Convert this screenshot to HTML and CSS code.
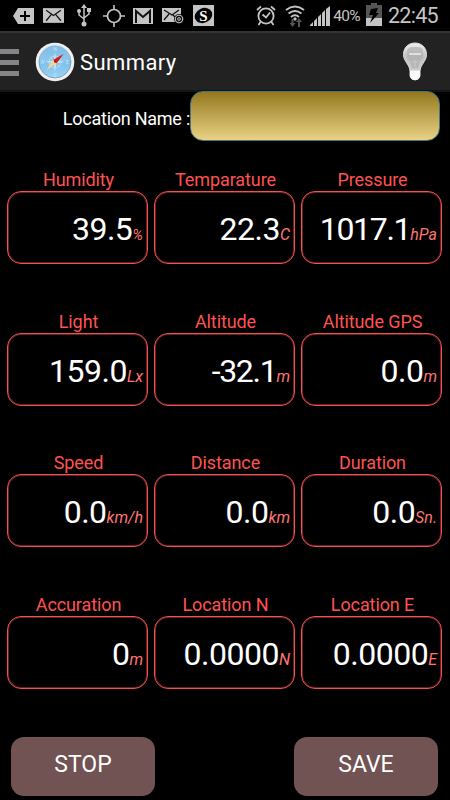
FILE: index.html
```html
<!DOCTYPE html>
<html lang="en">
<head>
    <meta charset="UTF-8">
    <meta name="viewport" content="width=device-width, initial-scale=1.0">
    <title>Summary</title>
    <link rel="stylesheet" href="styles.css">
</head>
<body>

<!-- status bar -->
<div class="status-bar">
    <div class="status-icons">
        <svg width="21" height="18" viewBox="0 0 21 18"><path d="M0 9l5-8h16v16H5z" fill="#c4c4c4"/><path d="M12 4v10M7 9h10" stroke="#000" stroke-width="2"/></svg>
        <svg width="21" height="15" viewBox="0 0 20 14"><path d="M0 0h20v14H0z" fill="#c4c4c4"/><path d="M3 2l7 5 7-5M3 12l5-6M17 12l-5-6" fill="none" stroke="#111" stroke-width="1.2"/></svg>
        <svg width="14" height="23" viewBox="0 0 14 23"><path d="M7 2v18M7 15l-5-4V7M7 14l5-4V6" fill="none" stroke="#c4c4c4" stroke-width="1.5"/><path d="M7 0l3 4H4zM10 4h4v4h-4z" fill="#c4c4c4"/><circle cx="2" cy="7" r="2" fill="#c4c4c4"/><circle cx="7" cy="20" r="2.5" fill="#c4c4c4"/></svg>
        <svg width="22" height="22" viewBox="0 0 22 22"><circle cx="11" cy="11" r="6.5" fill="none" stroke="#c4c4c4" stroke-width="1.7"/><path d="M11 0v5M11 17v5M0 11h5M17 11h5" stroke="#c4c4c4" stroke-width="1.6"/></svg>
        <svg width="20" height="16" viewBox="0 0 20 16"><path d="M0 0h20v16H0z" fill="#c4c4c4"/><path d="M3 15V3l7 6 7-6v12" fill="none" stroke="#111" stroke-width="2"/></svg>
        <svg width="22" height="17" viewBox="0 0 22 17"><path d="M0 1h19v14H0z" fill="#c4c4c4"/><path d="M2 3l8 5 7-5M2 13l5-6M11 8l2 2" fill="none" stroke="#111" stroke-width="1.3"/><circle cx="17" cy="12" r="5" fill="#111"/><circle cx="17" cy="12" r="3.7" fill="none" stroke="#c4c4c4" stroke-width="1.1"/><circle cx="17" cy="12" r="1.4" fill="none" stroke="#c4c4c4"/></svg>
        <svg class="money" width="21" height="21" viewBox="0 0 21 21"><path d="M0 0h21v21H0z" fill="#c4c4c4"/><ellipse cx="10.5" cy="10.5" rx="9" ry="7.3" fill="#000" transform="rotate(-25 10.5 10.5)"/><text x="10.5" y="16" text-anchor="middle">S</text></svg>
    </div>
    <div class="status-right">
        <svg width="20" height="21" viewBox="0 0 20 21"><circle cx="10" cy="11" r="7.6" fill="none" stroke="#c4c4c4" stroke-width="1.8"/><path d="M6.500 9.500l3.500 3 4-5M4.500 17l-2 3M15.500 17l2 3M1 5l4-3.500M19 5l-4-3.500" fill="none" stroke="#c4c4c4" stroke-width="1.8"/></svg>
        <svg class="wifi" width="20" height="22" viewBox="0 0 20 22"><g fill="none" stroke="#c4c4c4" stroke-width="1.9"><path d="M1 5q9-7 18 0"/><path d="M3.500 8.500q6.500-5 13 0"/><path d="M6 12q4-3.500 8 0"/></g><path d="M10 12l2 2-2 2-2-2z" fill="#c4c4c4"/><path d="M8.500 14v4h2l-3 4-3-4h2v-4zM13 22v-5h-2l3-4 3 4h-2v5z" fill="#555"/></svg>
        <svg class="signal" width="20" height="20" viewBox="0 0 20 20"><path d="M0 20v-1l3-3v4zM4 20v-5l3-3v8zM8 20v-9l3-3v12zM12 20V7l3-3v16zM16 20V3l4-3v20z" fill="#c4c4c4"/></svg>
        <span class="percent">40%</span>
        <svg class="battery" width="16" height="23" viewBox="0 0 16 23"><path d="M5 0h6v2h5v21H0V2h5z" fill="#555"/><path d="M0 15h16v8H0z" fill="#c4c4c4"/><path d="M5 6l7-1-2 5h3L4 20l3-8H3z" fill="#000"/></svg>
        <span class="clock">22:45</span>
    </div>
</div>

<header class="app-header">
    <div class="menu">
        <span></span>
        <span></span>
        <span></span>
    </div>
    <svg class="compass" width="40" height="40" viewBox="0 0 40 40">
        <defs>
            <linearGradient id="sky" x1="0" y1="0" x2="0" y2="1">
                <stop offset="0" stop-color="#5fa9df"/>
                <stop offset="1" stop-color="#9bd3f3"/>
            </linearGradient>
        </defs>
        <circle cx="20" cy="20" r="19.300" fill="#f1f0ee"/>
        <circle cx="20" cy="20" r="16" fill="url(#sky)" stroke="#6399c5" stroke-width=".8"/>
        <path d="M4.500 18a15.500 15.500 0 0 1 31 0q-15 5-31 0z" fill="#a5d4f1" opacity=".45"/>
        <circle cx="20" cy="20" r="6" fill="none" stroke="#b4dcf4"/>
        <path d="M20 10l1.200 8.800L30 20l-8.800 1.200L20 30l-1.200-8.800L10 20l8.800-1.200z" fill="#c9e7f8"/>
        <path d="M15 15l10 10M25 15L15 25" stroke="#b4dcf4" stroke-width=".8"/>
        <g class="compass-letters"><text x="20" y="9">N</text><text x="20" y="35">S</text><text x="7.500" y="22">W</text><text x="32.500" y="22">E</text></g>
        <path d="M28.500 12L18 18l3.500 3.500z" fill="#d81818"/>
        <path d="M11.500 28L18 18l3.500 3.500z" fill="#f0d98a"/>
        <circle cx="20" cy="19.700" r="1" fill="#911"/>
    </svg>
    <h1>Summary</h1>
    <svg class="bulb" width="26" height="40" viewBox="0 0 26 40">
        <defs>
            <linearGradient id="glass" x1="0" y1="0" x2="0" y2="1">
                <stop offset="0" stop-color="#f0f0f0"/>
                <stop offset=".35" stop-color="#c4c4c4"/>
                <stop offset="1" stop-color="#cfcfcf"/>
            </linearGradient>
        </defs>
        <path d="M13 1C6 1 1.500 6 1.500 12.500c0 7 6.500 10 6.500 17V34q1 4 5 4t5-4v-4.500c0-7 6.500-10 6.500-17C24.500 6 20 1 13 1z" fill="url(#glass)" stroke="#dedede"/>
        <path d="M5 9q1-4 5-4h6q4 0 5 4v7q-3 2-5 10h-6Q8 18 5 16z" fill="#aaa" opacity=".6"/>
        <path d="M7 12h12" stroke="#eee" stroke-width="1.500"/>
        <path d="M13 18v7M10 20h6" stroke="#c8c8c8"/>
        <path d="M8 28.500h10V34q-1 4-5 4t-5-4z" fill="#fafafa"/>
    </svg>
</header>

<div class="location">
    <label for="locationName">Location Name :</label>
    <input type="text" id="locationName">
</div>

<!-- sensor values -->
<div class="sensors">
    <div class="sensor"><h2>Humidity</h2><div class="box"><span class="value">39.5</span><span class="unit small">%</span></div></div>
    <div class="sensor"><h2>Temparature</h2><div class="box"><span class="value">22.3</span><span class="unit">C</span></div></div>
    <div class="sensor"><h2>Pressure</h2><div class="box"><span class="value narrow">1017.1</span><span class="unit">hPa</span></div></div>

    <div class="sensor"><h2>Light</h2><div class="box"><span class="value">159.0</span><span class="unit">Lx</span></div></div>
    <div class="sensor"><h2>Altitude</h2><div class="box"><span class="value narrow">-32.1</span><span class="unit">m</span></div></div>
    <div class="sensor"><h2>Altitude GPS</h2><div class="box"><span class="value">0.0</span><span class="unit">m</span></div></div>

    <div class="sensor"><h2>Speed</h2><div class="box"><span class="value">0.0</span><span class="unit">km/h</span></div></div>
    <div class="sensor"><h2>Distance</h2><div class="box"><span class="value">0.0</span><span class="unit">km</span></div></div>
    <div class="sensor"><h2>Duration</h2><div class="box"><span class="value">0.0</span><span class="unit">Sn.</span></div></div>

    <div class="sensor"><h2>Accuration</h2><div class="box"><span class="value">0</span><span class="unit">m</span></div></div>
    <div class="sensor"><h2>Location N</h2><div class="box"><span class="value">0.0000</span><span class="unit">N</span></div></div>
    <div class="sensor"><h2>Location E</h2><div class="box"><span class="value">0.0000</span><span class="unit">E</span></div></div>
</div>

<div class="buttons">
    <button>STOP</button>
    <button>SAVE</button>
</div>

</body>
</html>
```
FILE: styles.css
```css
body {
    font-family: Roboto, sans-serif;
    margin: 0;
    width: 450px;
    height: 800px;
    background-color: #000;
    color: #fff;
    overflow: hidden;
}

svg {
    display: block;
    flex: none;
}

/* status bar */
.status-bar {
    display: flex;
    justify-content: space-between;
    height: 31px;
    padding: 0 13px 0 13px;
    color: #c4c4c4;
}

.status-icons {
    display: flex;
    align-items: center;
    gap: 9px;
}

.status-icons svg:nth-child(3) {
    margin: 0 3px 0 4px;
}

.status-icons svg:nth-child(4) {
    margin-right: -1px;
}

.money text {
    font: bold 15px "Liberation Serif", serif;
    fill: #fff;
}

.status-right {
    display: flex;
    align-items: center;
}

.wifi {
    margin-left: 9px;
}

.signal {
    margin-left: 5px;
}

.percent {
    font-size: 15.5px;
    letter-spacing: -0.7px;
    margin: 1px 6px 0 3px;
}

.battery {
    margin-top: -2px;
}

.clock {
    font-size: 21.5px;
    letter-spacing: -0.7px;
    margin-left: 6px;
    margin-right: -1px;
}

/* header */
.app-header {
    display: flex;
    align-items: center;
    height: 61px;
    box-sizing: border-box;
    border-top: 2px solid #343434;
    border-bottom: 2px solid #141414;
    background-color: #222;
    padding-right: 22px;
}

.menu {
    display: flex;
    flex-direction: column;
    gap: 6px;
    margin-right: 16px;
    margin-top: 2px;
}

.menu span {
    width: 19px;
    height: 5px;
    background-color: #858588;
}

.compass-letters {
    font-size: 5px;
    text-anchor: middle;
    fill: #c9e7f8;
}

.app-header h1 {
    flex: 1;
    font-size: 22px;
    font-weight: normal;
    letter-spacing: 0.4px;
    margin: 1px 0 0 5px;
}

/* location name */
.location {
    display: flex;
    justify-content: flex-end;
    align-items: center;
    height: 50px;
    margin-top: -1px;
    padding-right: 10px;
}

.location label {
    font-size: 18px;
    letter-spacing: -0.25px;
    margin-top: 5px;
}

.location input {
    width: 250px;
    height: 50px;
    box-sizing: border-box;
    border: 1px solid #47777a;
    border-radius: 13px;
    background: linear-gradient(#94781e, #e9d286);
}

/* sensors */
.sensors {
    display: grid;
    grid-template-columns: repeat(3, 141px);
    column-gap: 6px;
    row-gap: 46.7px;
    padding: 28px 0 0 7px;
}

.sensor h2 {
    font-size: 18px;
    font-weight: normal;
    letter-spacing: -0.1px;
    line-height: 22px;
    height: 22px;
    margin: 0;
    padding-left: 2px;
    text-align: center;
    color: #ff5252;
}

.box {
    display: flex;
    justify-content: flex-end;
    align-items: baseline;
    height: 73px;
    box-sizing: border-box;
    border: 1px solid #f55151;
    border-radius: 14px;
    box-shadow: inset 0 0 0 1px rgba(245, 81, 81, 0.4);
    padding: 18px 4px 0 0;
}

.value {
    font-size: 32px;
    line-height: 38px;
    letter-spacing: -0.5px;
}

.narrow {
    letter-spacing: -1.3px;
}

.unit {
    font-size: 16px;
    font-style: italic;
    color: #ff7575;
}

.small {
    font-size: 15px;
}

/* bottom buttons */
.buttons {
    display: flex;
    justify-content: space-between;
    padding: 48px 12px 0 11px;
}

.buttons button {
    font-family: Roboto, sans-serif;
    font-size: 23px;
    width: 144px;
    height: 59px;
    padding: 0 0 5px;
    border: none;
    border-radius: 13px;
    background-color: #725353;
    color: #fff;
}
```
